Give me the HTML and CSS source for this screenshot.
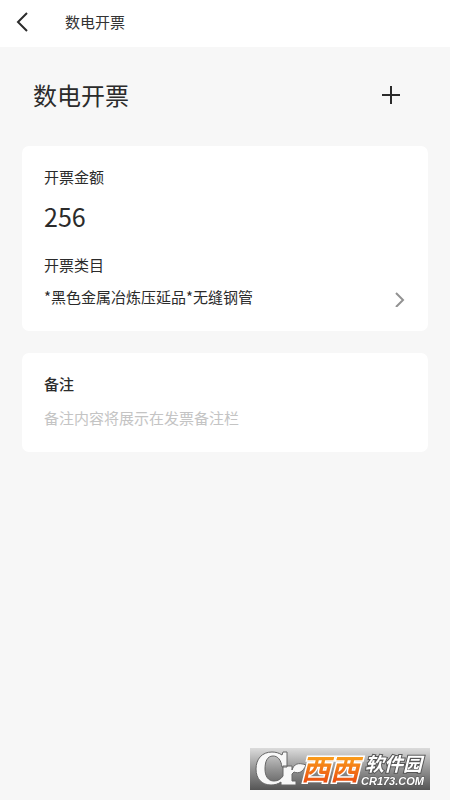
FILE: index.html
```html
<!DOCTYPE html>
<html lang="zh-CN">
<head>
<meta charset="utf-8">
<meta name="viewport" content="width=device-width, initial-scale=1">
<title>数电开票</title>
<link rel="stylesheet" href="styles.css">
</head>
<body>
<header class="topbar">
  <button class="icon-button" type="button" aria-label="返回">
    <svg width="14" height="20" viewBox="0 0 14 20"><path class="stroke-back" d="M12 1 3 10l9 9"/></svg>
  </button>
  <span class="topbar-title">数电开票</span>
</header>
<main class="page">
  <div class="heading">
    <h1 class="heading-title">数电开票</h1>
    <button class="icon-button" type="button" aria-label="添加">
      <svg width="20" height="20" viewBox="0 0 20 20"><path class="stroke-add" d="M10 1v18M1 10h18"/></svg>
    </button>
  </div>
  <section class="card">
    <label class="label" for="amount">开票金额</label>
    <input class="amount" id="amount" type="text" inputmode="decimal" value="256">
    <h2 class="label">开票类目</h2>
    <button class="category" type="button">
      <span>*黑色金属冶炼压延品*无缝钢管</span>
      <svg width="11" height="20" viewBox="0 0 11 20"><path class="stroke-chevron" d="M1 6l7 7-7 7"/></svg>
    </button>
  </section>
  <section class="card">
    <label class="label label-strong" for="note">备注</label>
    <input class="note" id="note" type="text" placeholder="备注内容将展示在发票备注栏">
  </section>
</main>
<svg class="watermark" width="180" height="42" viewBox="0 0 180 42">
  <defs>
    <linearGradient id="plate" x1="0" y1="0" x2="0" y2="1"><stop offset="0" stop-color="#dcdcdc"/><stop offset="0.5" stop-color="#949494"/><stop offset="1" stop-color="#555"/></linearGradient>
    <linearGradient id="orange" x1="0" y1="0" x2="0" y2="1"><stop offset="0.2" stop-color="#fba41c"/><stop offset="0.9" stop-color="#ea4a10"/></linearGradient>
  </defs>
  <rect width="180" height="42" fill="url(#plate)"/>
  <path class="logo" d="M37 4v15h-5C31 12 28 8 23 8c-6 0-8 6-8 13s3 12 9 12c4 0 7-2 9-5V18h9v4c2-6 6-8 14-5-3 7-7 9-12 7l-2 2v7h4v4H31v-3c-3 2-6 3-10 3C12 37 6 31 6 21S12 4 22 4c4 0 7 1 10 3l1-3z"/>
  <text class="mark-orange" x="51" y="32">西西</text>
  <text class="mark-name" x="115" y="23">软件园</text>
  <text class="mark-site" x="111" y="37">CR173.COM</text>
</svg>
</body>
</html>
```
FILE: styles.css
```css
* {
  box-sizing: border-box;
}

body {
  margin: 0;
  min-height: 100vh;
  background: #f7f7f7;
  color: #2b2b2b;
  font: 15px/24px "Noto Sans CJK SC", sans-serif;
}

button,
input {
  padding: 0;
  border: 0;
  background: none;
  color: inherit;
  font: inherit;
}

svg {
  display: block;
  fill: none;
}

.topbar {
  display: flex;
  align-items: center;
  gap: 36px;
  height: 47px;
  padding: 0 15px 3px;
  background: #fff;
}

.topbar-title {
  color: #333;
}

.stroke-back,
.stroke-add,
.stroke-chevron {
  stroke: #2b2b2b;
  stroke-width: 2;
}

.stroke-chevron {
  stroke: #929292;
}

.page {
  display: grid;
  gap: 22px;
  padding: 24px 22px;
}

.heading {
  display: flex;
  align-items: center;
  justify-content: space-between;
  height: 47px;
  margin-bottom: 6px;
  padding: 0 27px 0 11px;
}

.heading-title {
  margin: 0;
  font-size: 24px;
  line-height: 36px;
  font-weight: 400;
}

.card {
  padding: 19px 22px 14px;
  border-radius: 7px;
  background: #fff;
}

.label {
  display: block;
  margin: 0;
  font-size: 15px;
  font-weight: 400;
}

.label-strong {
  font-weight: 500;
}

.amount {
  display: block;
  width: 100%;
  height: 54px;
  margin-bottom: 10px;
  font-size: 25px;
}

.category {
  display: flex;
  align-items: center;
  justify-content: space-between;
  width: 100%;
  height: 40px;
}

.note {
  display: block;
  width: 100%;
  height: 42px;
}

.note::placeholder {
  color: #c4c4c4;
}

.watermark {
  position: fixed;
  right: 20px;
  bottom: 10px;
  overflow: visible;
}

.logo {
  fill: #f8f8f8;
  stroke: #666;
  stroke-width: 1;
}

.mark-orange,
.mark-name,
.mark-site {
  font-style: italic;
  font-weight: 700;
  paint-order: stroke;
}

.mark-orange {
  fill: url(#orange);
  stroke: #fff;
  stroke-width: 3;
  font-size: 29px;
}

.mark-name {
  fill: #fff;
  stroke: #555;
  stroke-width: 2;
  font-size: 19px;
}

.mark-site {
  fill: #fff;
  stroke: #555;
  stroke-width: 1;
  font-family: "Liberation Sans", sans-serif;
  font-size: 11px;
}
```
